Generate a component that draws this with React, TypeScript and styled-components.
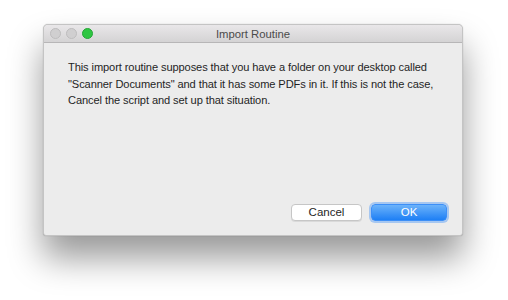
import React from "react";
import styled, { createGlobalStyle } from "styled-components";

const Global = createGlobalStyle`
  html, body { margin: 0; padding: 0; background: #ffffff; }
  body { font-family: "Liberation Sans", Arial, sans-serif; }
`;

const Page = styled.div`
  width: 508px;
  height: 300px;
  padding: 24px 0 0 43px;
  box-sizing: border-box;
`;

const Window = styled.div`
  width: 420px;
  height: 212px;
  display: flex;
  flex-direction: column;
  box-sizing: border-box;
  border: 1px solid #c4c4c4;
  border-radius: 5px 5px 3px 3px;
  background: #ececec;
  overflow: hidden;
  box-shadow: 0 22px 34px rgba(0, 0, 0, 0.4), 0 0 1px rgba(0, 0, 0, 0.3);
`;

const TitleBar = styled.div`
  height: 17px;
  flex: 0 0 auto;
  display: flex;
  align-items: center;
  position: relative;
  padding-left: 6px;
  gap: 5px;
  background: linear-gradient(#e9e7e9, #d4d3d4);
  border-bottom: 1px solid #b7b6b7;
`;

const Light = styled.span<{ $color: string; $border: string }>`
  width: 11px;
  height: 11px;
  border-radius: 50%;
  box-sizing: border-box;
  background: ${(p) => p.$color};
  border: 1px solid ${(p) => p.$border};
`;

const Title = styled.div`
  position: absolute;
  left: 0;
  right: 0;
  top: 0;
  bottom: 0;
  display: flex;
  align-items: center;
  justify-content: center;
  font-size: 11.3px;
  color: #4b4b4b;
  pointer-events: none;
`;

const Body = styled.div`
  flex: 1;
  display: flex;
  flex-direction: column;
  justify-content: space-between;
  padding: 16px 14px 14px 24px;
`;

const Message = styled.p`
  margin: 0;
  font-size: 11.1px;
  letter-spacing: -0.1px;
  line-height: 16.5px;
  color: #1f1f1f;
  white-space: nowrap;
`;

const Buttons = styled.div`
  display: flex;
  justify-content: flex-end;
  gap: 9px;
`;

const Button = styled.button<{ $primary?: boolean }>`
  height: 17px;
  width: ${(p) => (p.$primary ? "76px" : "71px")};
  padding: 0;
  font-family: "Liberation Sans", Arial, sans-serif;
  font-size: 11.5px;
  line-height: 15px;
  border-radius: 4px;
  box-sizing: border-box;
  color: ${(p) => (p.$primary ? "#ffffff" : "#262626")};
  border: 1px solid ${(p) => (p.$primary ? "#3d8ff7" : "#c6c6c6")};
  background: ${(p) =>
    p.$primary ? "linear-gradient(#6cb3fa, #1e7ff5)" : "#ffffff"};
  box-shadow: ${(p) =>
    p.$primary
      ? "0 0 0 2px rgba(110, 170, 245, 0.55)"
      : "0 1px 0 rgba(0,0,0,0.08)"};
  margin-right: ${(p) => (p.$primary ? "1px" : "0")};
`;

export default function App() {
  return (
    <>
      <Global />
      <Page>
        <Window>
          <TitleBar>
            <Light $color="#d0cfd0" $border="#bdbcbd" />
            <Light $color="#d0cfd0" $border="#bdbcbd" />
            <Light $color="#2fc642" $border="#25a637" />
            <Title>Import Routine</Title>
          </TitleBar>
          <Body>
            <Message>
              This import routine supposes that you have a folder on your desktop called
              <br />
              "Scanner Documents" and that it has some PDFs in it. If this is not the case,
              <br />
              Cancel the script and set up that situation.
            </Message>
            <Buttons>
              <Button>Cancel</Button>
              <Button $primary>OK</Button>
            </Buttons>
          </Body>
        </Window>
      </Page>
    </>
  );
}
